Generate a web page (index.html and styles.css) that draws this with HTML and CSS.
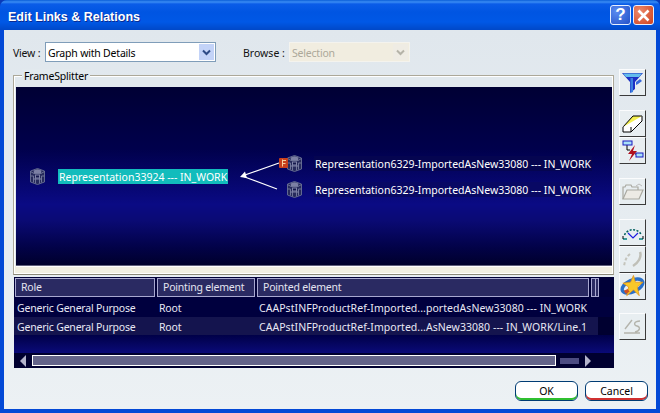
FILE: index.html
```html
<!DOCTYPE html>
<html lang="en">
<head>
    <meta charset="UTF-8">
    <title>Edit Links &amp; Relations</title>
    <link rel="stylesheet" href="styles.css">
</head>
<body>
    <svg class="defs" width="0" height="0">
        <symbol id="node" viewBox="0 0 17 17">
            <path d="M8.500 .5 15.500 3V14L8.500 16.500 1.500 14V3Z" fill="#262a5c" stroke="#616890"/>
            <path d="M1.500 3.500 5 5.500H12L15.500 3.500M1.500 8H4.500V14.500M15.500 8H12.500V14.500M6.500 7V15.500M10.500 7V15.500" fill="none" stroke="#6e7498"/>
            <path d="M4.500 2.500 8.500 1.200 12.500 2.500 12 5H5Z" fill="#7c80a4"/>
            <rect x="6.500" y="7" width="4" height="3" fill="#14184c" stroke="#8084a8"/>
            <path d="M4.500 11H12.500" stroke="#8084a8"/>
        </symbol>
    </svg>
    <div class="window">
        <div class="titlebar">
            <span class="title">Edit Links &amp; Relations</span>
            <button class="cap cap-help">?</button>
            <button class="cap cap-close">
                <svg width="13" height="13" viewBox="0 0 13 13"><path d="M1.500 1.500 11.500 11.500M11.500 1.500 1.500 11.500" stroke="#fff" stroke-width="2.600"/></svg>
            </button>
        </div>
        <div class="content">
            <div class="options">
                <label class="opt-label">View :</label>
                <div class="combo">
                    <span class="combo-text">Graph with Details</span>
                    <span class="combo-btn">
                        <svg width="9" height="7" viewBox="0 0 9 7"><path d="M1 1.500 4.500 5 8 1.500" fill="none" stroke="#2d4a86" stroke-width="2"/></svg>
                    </span>
                </div>
                <label class="opt-label opt-browse">Browse :</label>
                <div class="combo combo-off">
                    <span class="combo-text">Selection</span>
                    <span class="combo-btn">
                        <svg width="9" height="7" viewBox="0 0 9 7"><path d="M1 1.500 4.500 5 8 1.500" fill="none" stroke="#b5b3a8" stroke-width="2"/></svg>
                    </span>
                </div>
            </div>
            <div class="main">
                <div class="panes">
                    <div class="frame">
                        <span class="legend">FrameSplitter</span>
                        <div class="graph">
                            <svg class="links" width="596" height="178" viewBox="0 0 596 178">
                                <path d="M226 89 263 76M226 89 261 102" stroke="#fff" stroke-width="1.200" fill="none"/>
                                <path d="M224 90 229 84.500 231 91Z" fill="#fff"/>
                            </svg>
                            <svg class="node n1"><use href="#node"/></svg>
                            <svg class="node n2"><use href="#node"/></svg>
                            <svg class="node n3"><use href="#node"/></svg>
                            <svg class="broken" width="9" height="10" viewBox="0 0 9 10">
                                <rect width="9" height="10" rx="1" fill="#c8401c"/>
                                <path d="M3.500 1.500V8.500M3.500 2.500H7M3.500 5.500H6.500" stroke="#f4d0a0" fill="none"/>
                            </svg>
                            <span class="label label-sel">Representation33924 --- IN_WORK</span>
                            <span class="label l2">Representation6329-ImportedAsNew33080 --- IN_WORK</span>
                            <span class="label l3">Representation6329-ImportedAsNew33080 --- IN_WORK</span>
                        </div>
                    </div>
                    <div class="list">
                        <div class="list-row list-head">
                            <span class="head-cell">Role</span>
                            <span class="head-cell">Pointing element</span>
                            <span class="head-cell">Pointed element</span>
                            <span class="head-end"></span>
                        </div>
                        <div class="list-row row-a">
                            <span class="cell">Generic General Purpose</span>
                            <span class="cell">Root</span>
                            <span class="cell cell-long">CAAPstINFProductRef-Imported...portedAsNew33080 --- IN_WORK</span>
                        </div>
                        <div class="list-row row-b">
                            <span class="cell">Generic General Purpose</span>
                            <span class="cell">Root</span>
                            <span class="cell cell-long">CAAPstINFProductRef-Imported...AsNew33080 --- IN_WORK/Line.1</span>
                        </div>
                        <div class="list-fill"></div>
                        <div class="scroll">
                            <svg width="7" height="12" viewBox="0 0 7 12"><path d="M6 0V12L0 6Z" fill="#b4b4cc"/></svg>
                            <span class="scroll-track"></span>
                            <span class="scroll-rest"></span>
                            <svg width="7" height="12" viewBox="0 0 7 12"><path d="M1 0V12L7 6Z" fill="#b4b4cc"/></svg>
                        </div>
                    </div>
                </div>
                <div class="tools">
                    <button class="tool">
                        <svg width="23" height="23" viewBox="0 0 23 23">
                            <path d="M1 2H22L14 11V18L9 22V11Z" fill="#1c30c4"/>
                            <path d="M2 2.500H21L18 6H5Z" fill="#62bcec"/>
                            <path d="M9.500 7H12V21L9.500 22Z" fill="#3c80e0"/>
                            <path d="M15 11 19 8 21 10 17 13 15 14Z" fill="#3868dc"/>
                        </svg>
                    </button>
                    <button class="tool tool-gap">
                        <svg width="21" height="18" viewBox="0 0 21 18">
                            <path d="M1 12 11 1H20L9 12Z" fill="#f4f050" stroke="#000"/>
                            <path d="M1 12V17H9L20 6V1M9 12V17" fill="#fff" stroke="#000"/>
                        </svg>
                    </button>
                    <button class="tool">
                        <svg width="23" height="23" viewBox="0 0 23 23">
                            <path d="M6 6V11H9M14 15H17" stroke="#000" fill="none"/>
                            <rect x="2" y="2" width="9" height="4" fill="#a8e0f8" stroke="#1818c0"/>
                            <rect x="15" y="14" width="7" height="4" fill="#a8e0f8" stroke="#1818c0"/>
                            <path d="M14 6 7 15H11L8 22 16 12H12Z" fill="#b01020"/>
                        </svg>
                    </button>
                    <button class="tool tool-gap">
                        <svg width="22" height="18" viewBox="0 0 22 18">
                            <path d="M1 16V4H3L4 2H9L10 4H16V7" fill="none" stroke="#a8a8a0" stroke-width="1.200"/>
                            <path d="M1 16 5 7H21L17 16Z" fill="#eceae4" stroke="#a8a8a0" stroke-width="1.200"/>
                            <path d="M14 3 17 1 20 3" fill="none" stroke="#bbb"/>
                        </svg>
                    </button>
                    <button class="tool tool-gap">
                        <svg width="22" height="18" viewBox="0 0 22 18">
                            <path d="M2.500 11A9.500 9.500 0 0 1 19.500 11" fill="none" stroke="#006060" stroke-width="1.500" stroke-dasharray="2 1.500"/>
                            <path d="M1 15H5M17 15H21" stroke="#008080" stroke-width="1.500"/>
                            <path d="M1 12V15M21 12V15" stroke="#000"/>
                            <path d="M6 9 11 14 16 9" fill="none" stroke="#1c1ce0" stroke-width="1.200"/>
                        </svg>
                    </button>
                    <button class="tool">
                        <svg width="22" height="18" viewBox="0 0 22 18">
                            <path d="M8 3C4 6 3 10 2 15" fill="none" stroke="#c4c4bc" stroke-width="2" stroke-dasharray="3 2"/>
                            <path d="M18 1C20 6 16 12 11 15" fill="none" stroke="#c0c0b8" stroke-width="2.500"/>
                        </svg>
                    </button>
                    <button class="tool">
                        <svg width="26" height="25" viewBox="0 0 26 25">
                            <ellipse cx="13" cy="12" rx="11.500" ry="6" fill="none" stroke="#2a70c8" stroke-width="3.500" transform="rotate(-25 13 12)"/>
                            <path d="M14 1 16 8 24 8 18 13 20 22 14 16 7 22 9 13 3 9 11 8Z" fill="#f8c828" stroke="#e09018" stroke-width=".8"/>
                            <path d="M4 17 8 15 10 18 6 20Z" fill="#d05020"/>
                        </svg>
                    </button>
                    <button class="tool tool-gap2">
                        <svg width="22" height="18" viewBox="0 0 22 18">
                            <path d="M10 2 3 11M18 3C12 3 11 7 15 8 19 9 18 13 13 14M2 15H18" fill="none" stroke="#b4b4ac" stroke-width="1.400"/>
                        </svg>
                    </button>
                </div>
            </div>
            <div class="actions">
                <button class="btn btn-ok">OK</button>
                <button class="btn btn-cancel">Cancel</button>
            </div>
        </div>
    </div>
</body>
</html>
```

FILE: styles.css
```css
html, body {
    margin: 0;
    height: 100%;
}

body {
    background: #0a3ab8;
    font-family: "Noto Sans", sans-serif;
    font-size: 10.5px;
    letter-spacing: -0.2px;
    overflow: hidden;
}

.defs {
    position: absolute;
}

.window {
    width: 660px;
    height: 413px;
    display: flex;
    flex-direction: column;
    box-sizing: border-box;
    border-radius: 7px 7px 0 0;
    background: #0349d6;
    overflow: hidden;
}

.titlebar {
    height: 30px;
    flex: none;
    display: flex;
    align-items: center;
    box-sizing: border-box;
    padding: 3px 6px 3px 8px;
    background: linear-gradient(#0a5ed8 0, #3a8cf4 2px, #0a5ce8 4px, #0055e2 12px, #0058e6 22px, #0048c8 30px);
}

.title {
    flex: 1;
    padding-top: 4px;
    color: #fff;
    font-family: "Liberation Sans", sans-serif;
    font-weight: bold;
    font-size: 12.5px;
    letter-spacing: 0;
    text-shadow: 1px 1px 0 #0a2a90;
}

.cap {
    width: 21px;
    height: 20px;
    padding: 0;
    margin-left: 2px;
    border: 1px solid #e8f0ff;
    border-radius: 3px;
    color: #fff;
    display: flex;
    align-items: center;
    justify-content: center;
}

.cap-help {
    background: radial-gradient(circle at 30% 30%, #5a8cf0, #2450c8);
    font: bold 17px "Liberation Sans", sans-serif;
}

.cap-close {
    background: radial-gradient(circle at 30% 30%, #ec8a6c, #d0401c);
}

.content {
    flex: 1;
    margin: 0 4px 4px;
    padding: 12px 10px 0 9px;
    background: linear-gradient(#e0e7ed, #ecf1f4);
    color: #000;
    min-height: 0;
}

.options {
    display: flex;
    align-items: center;
    height: 20px;
}

.opt-label {
    width: 32px;
    padding-top: 1px;
    color: #111;
}

.opt-browse {
    width: 46px;
    margin-left: 27px;
    letter-spacing: 0;
}

.combo {
    width: 171px;
    height: 20px;
    box-sizing: border-box;
    border: 1px solid #7f9db9;
    background: #fff;
    display: flex;
    align-items: center;
    padding-left: 2px;
}

.combo-text {
    flex: 1;
    padding-top: 1px;
}

.combo-btn {
    width: 15px;
    height: 16px;
    margin-right: 1px;
    background: #c3d3f8;
    display: flex;
    align-items: center;
    justify-content: center;
}

.combo-off {
    width: 121px;
    border-color: #f4f3ee;
    background: #f1ede0;
    color: #aca899;
}

.combo-off .combo-btn {
    background: #efece4;
}

.main {
    display: flex;
    margin-top: 7px;
}

.panes {
    width: 601px;
    padding-top: 6px;
}

.frame {
    position: relative;
    height: 200px;
    box-sizing: border-box;
    border: 1px solid #aca899;
    border-bottom-color: #8a8878;
    box-shadow: inset 0 0 0 1px #fff;
    padding: 11px 1px 0 2px;
    background: linear-gradient(#e2e9ee 0 190px, #f1efe2 190px);
}

.legend {
    position: absolute;
    top: -7px;
    left: 8px;
    padding: 0 2px;
    background: #e2e9ee;
}

.graph {
    position: relative;
    height: 178px;
    background: linear-gradient(#000034 0, #00004c 35%, #0a0a84 66%, #0a0a74 75%, #020248 90%, #00002c 100%);
    box-shadow: 0 1px 0 #60607c, 0 2px 0 #fff;
}

.links {
    position: absolute;
    top: 0;
    left: 0;
}

.node {
    position: absolute;
    width: 17px;
    height: 17px;
}

.n1 { left: 13px; top: 81px; }
.n2 { left: 270px; top: 68px; }
.n3 { left: 270px; top: 94px; }

.broken {
    position: absolute;
    left: 263px;
    top: 71px;
}

.label {
    position: absolute;
    height: 15px;
    color: #fff;
    white-space: nowrap;
    line-height: 17px;
    letter-spacing: 0;
    padding: 0 1px;
}

.label-sel {
    left: 42px;
    top: 82px;
    background: #12bcbc;
}

.l2 { left: 298px; top: 69px; background: #050550; }
.l3 { left: 298px; top: 95px; background: #080864; }

.list {
    height: 91px;
    width: 600px;
    margin: 2px 0 0 1px;
    display: flex;
    flex-direction: column;
    background: #000030;
    color: #fff;
}

.list-row {
    display: grid;
    grid-template-columns: 142px 100px 334px;
    flex: none;
}

.list-head {
    height: 20px;
    padding: 1px 0 0 1px;
    box-sizing: border-box;
    grid-template-columns: 140px 98px 332px 8px;
    column-gap: 2px;
    background: #000038;
}

.head-cell, .head-end {
    border: 1px solid #a8a8d0;
    background: #2a2a62;
    padding-left: 5px;
    line-height: 17px;
    color: #e4e4f0;
}

.head-end {
    padding: 0;
    background: linear-gradient(90deg, #2a2a62 3px, #a8a8d0 3px 4px, #2a2a62 4px);
}

.cell {
    padding-left: 3px;
    color: #e8e8f4;
    white-space: nowrap;
}

.cell-long {
    letter-spacing: 0.05px;
}

.row-a {
    height: 20px;
    line-height: 23px;
    background: #00003e;
}

.row-b {
    height: 18px;
    line-height: 20px;
    width: 584px;
    background: #14144e;
}

.list-fill {
    height: 18px;
    flex: none;
    background: linear-gradient(#000048, #0a0a78);
}

.scroll {
    flex: 1;
    display: flex;
    align-items: center;
    padding-left: 6px;
}

.scroll-track {
    width: 522px;
    height: 9px;
    margin-left: 5px;
    border: 1px solid #fff;
    background: #64648a;
}

.scroll-rest {
    width: 19px;
    height: 6px;
    margin: 0 5px 0 4px;
    background: #4c4c82;
}

.tools {
    width: 27px;
    margin-left: 5px;
    display: flex;
    flex-direction: column;
}

.tool {
    width: 27px;
    height: 27px;
    padding: 0;
    box-sizing: border-box;
    border: 1px solid;
    border-color: #fbfcfd #3a3a3a #3a3a3a #fbfcfd;
    background: #e8eef1;
    display: flex;
    align-items: center;
    justify-content: center;
}

.tool-gap {
    margin-top: 14px;
}

.tool-gap2 {
    margin-top: 13px;
}

.actions {
    display: flex;
    justify-content: flex-end;
    gap: 7px;
    margin-top: 13px;
    margin-right: -2px;
}

.btn {
    width: 63px;
    height: 20px;
    padding: 0;
    box-sizing: border-box;
    border: 1px solid #003c74;
    border-radius: 6px;
    background: #fff;
    font: 10.5px "Noto Sans", sans-serif;
    color: #000;
}

.btn-ok {
    box-shadow: inset 0 -2px 0 #30c030;
}

.btn-cancel {
    box-shadow: inset 0 -2px 0 #d03030;
}
```
